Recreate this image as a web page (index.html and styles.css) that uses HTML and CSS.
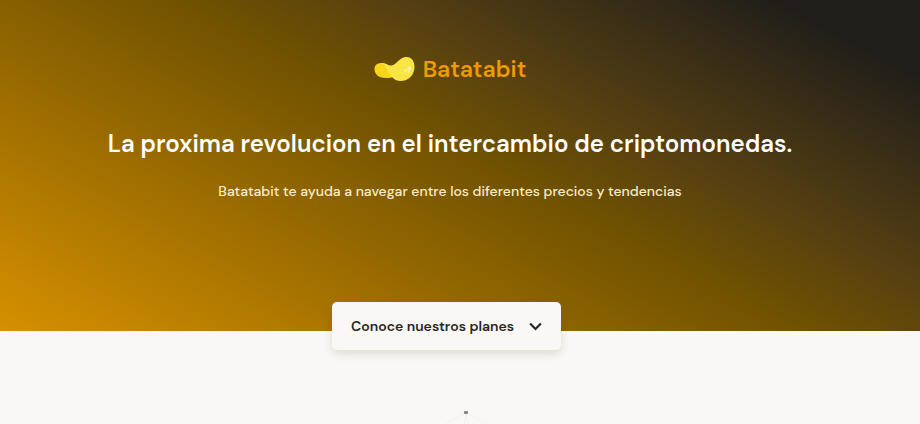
FILE: index.html
```html
<!DOCTYPE html>
<html lang="es">
<head>
  <meta charset="UTF-8">
  <meta name="viewport" content="width=device-width, initial-scale=1">
  <title>Batatabit</title>
  <link rel="stylesheet" href="styles.css">
</head>
<body>
  <header class="hero">
    <div class="logo">
      <svg class="logo-mark" viewBox="0 0 40 24" aria-hidden="true">
        <path fill="#f8d41c" d="M0 12C0 8 3 6 7 6C11 6 13 9 17 9L19 20C16 21 14 21 11 21C4 21 0 17 0 12Z"/>
        <path fill="#f8e544" d="M7 6C12 6 14 9 17 8.500C22 8 25 0 32 0C37 0 40 4 40 10C40 18 34 24 26 24C19 24 16 18 13.500 14C11.500 11 10 8 7 6Z"/>
        <g fill="#fbf3a0">
          <circle cx="31" cy="13.500" r="1.400"/>
          <circle cx="34.800" cy="11.500" r="1.900"/>
          <circle cx="34" cy="15" r="1.200"/>
        </g>
      </svg>
      <span class="logo-name">Batatabit</span>
    </div>
    <h1 class="hero-title">La proxima revolucion en el intercambio de criptomonedas.</h1>
    <p class="hero-text">Batatabit te ayuda a navegar entre los diferentes precios y tendencias</p>
    <a class="plans-link" href="#planes">
      <span>Conoce nuestros planes</span>
      <svg class="chevron" viewBox="0 0 12 8" aria-hidden="true">
        <path fill="none" stroke="#282623" stroke-width="2" d="M1 1.3L6 6.3L11 1.3"/>
      </svg>
    </a>
  </header>
  <main class="exchange">
    <svg class="network" viewBox="0 0 60 120" aria-hidden="true">
      <g fill="none" stroke="#f1f1ef">
        <path d="M30 2L0 20M30 2L60 20M30 2L24 50M30 2L38 50"/>
      </g>
      <rect x="28" y="1" width="4" height="3" rx="1" fill="#858582"/>
    </svg>
  </main>
</body>
</html>
```
FILE: styles.css
```css
* {
  box-sizing: border-box;
}

body {
  margin: 0;
  overflow-x: hidden;
  background: #f9f8f6;
  color: #282623;
  font-family: "DM Sans", Inter, sans-serif;
}

.hero {
  position: relative;
  display: flex;
  flex-direction: column;
  align-items: center;
  padding: 57px 20px 129px 0;
  background: linear-gradient(208deg, #201e1a 9%, #553f12 34%, #705200 48%, #d69000 100%);
  text-align: center;
}

.logo {
  display: flex;
  align-items: center;
  gap: 8px;
  height: 24px;
}

.logo-mark {
  width: 41px;
  height: 24px;
}

.logo-name {
  color: #f09a00;
  font-size: 23px;
  font-weight: 600;
  line-height: 24px;
}

.hero-title {
  margin: 47px 0 0;
  color: #fff;
  font-size: 24px;
  font-weight: 600;
  line-height: 32px;
}

.hero-text {
  margin: 20px 0 0;
  color: #f9ecc9;
  font-size: 14px;
  font-weight: 500;
  line-height: 22px;
}

.plans-link {
  position: absolute;
  bottom: -19px;
  left: calc(50% - 128px);
  display: flex;
  align-items: center;
  gap: 15px;
  padding: 0 19px;
  border-radius: 5px;
  background: #f9f8f6;
  box-shadow: 0 4px 8px rgba(89, 73, 30, 0.16);
  color: #282623;
  font-size: 14px;
  font-weight: 600;
  line-height: 48px;
  text-decoration: none;
  white-space: nowrap;
}

.chevron {
  width: 13px;
  height: 9px;
}

.exchange {
  display: flex;
  justify-content: center;
  height: 93px;
  padding: 79px 0 0 12px;
  overflow: hidden;
}

.network {
  flex: none;
  width: 60px;
  height: 120px;
}
```
